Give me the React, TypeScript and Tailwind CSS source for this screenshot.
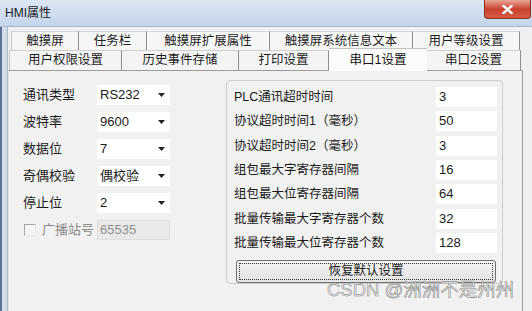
import React from 'react';

const font = "font-['Liberation_Sans','Noto_Sans_CJK_SC',sans-serif]";

const row1 = [
  { label: '触摸屏', w: 'w-[68px]' },
  { label: '任务栏', w: 'w-[68px]' },
  { label: '触摸屏扩展属性', w: 'w-[123px]' },
  { label: '触摸屏系统信息文本', w: 'w-[143px]' },
  { label: '用户等级设置', w: 'w-[107px]' },
];

const row2 = [
  { label: '用户权限设置', w: 'w-[113px]' },
  { label: '历史事件存储', w: 'w-[117px]' },
  { label: '打印设置', w: 'w-[90px]' },
  { label: '串口1设置', w: 'w-[98px]', active: true },
  { label: '串口2设置', w: 'w-[94px]' },
];

const combos = [
  { label: '通讯类型', value: 'RS232' },
  { label: '波特率', value: '9600' },
  { label: '数据位', value: '7' },
  { label: '奇偶校验', value: '偶校验' },
  { label: '停止位', value: '2' },
];

const params = [
  { label: 'PLC通讯超时时间', value: '3' },
  { label: '协议超时时间1（毫秒）', value: '50' },
  { label: '协议超时时间2（毫秒）', value: '3' },
  { label: '组包最大字寄存器间隔', value: '16' },
  { label: '组包最大位寄存器间隔', value: '64' },
  { label: '批量传输最大字寄存器个数', value: '32' },
  { label: '批量传输最大位寄存器个数', value: '128' },
];

function Arrow() {
  return (
    <svg width="7" height="4" viewBox="0 0 7 4" className="shrink-0">
      <path d="M0 0h7L3.5 4z" fill="#222" />
    </svg>
  );
}

export default function App() {
  return (
    <div className={`w-[532px] h-[311px] overflow-hidden flex flex-col bg-[#cfdced] ${font}`}>
      {/* title bar */}
      <div className="h-[27px] shrink-0 flex items-start justify-between bg-gradient-to-b from-[#dbe6f3] to-[#c4d5ea] border-b border-[#a5b8d0]">
        <span className="pl-[5px] pt-[5px] text-[12px] leading-[16px] text-[#1b1b1b]">HMI属性</span>
        <div className="mr-[1px] w-[47px] h-[19px] rounded-b-[4px] border border-t-0 border-[#8a2b20] bg-gradient-to-b from-[#e9a597] via-[#c8412f] to-[#d65b45] flex items-center justify-center">
          <svg width="11" height="9" viewBox="0 0 11 9">
            <path d="M1.5 1l8 7M9.5 1l-8 7" stroke="#fff" strokeWidth="2.4" strokeLinecap="square" />
          </svg>
        </div>
      </div>

      <div className="flex-1 flex">
        {/* left frame */}
        <div className="w-[8px] shrink-0 border-l-2 border-[#5d7294] bg-[#d3deeb] border-r border-r-[#a9b8cb]" />

        <div className="flex-1 flex flex-col bg-[#f0f0f0] pt-[4px]">
          {/* tab row 1 */}
          <div className="h-[19px] ml-[3px] flex shrink-0">
            {row1.map((t) => (
              <div
                key={t.label}
                className={`${t.w} h-full flex items-center justify-center text-[12.5px] text-[#1c1c1c] bg-[#f6f6f6] border-t border-t-[#d6d6d6] border-r border-r-[#8f8f8f] first:border-l first:border-l-[#c8c8c8]`}
              >
                {t.label}
              </div>
            ))}
          </div>
          {/* tab row 2 */}
          <div className="h-[20px] ml-[1px] flex shrink-0 relative z-10">
            {row2.map((t) =>
              t.active ? (
                <div
                  key={t.label}
                  className={`${t.w} h-[23px] -mt-[2px] flex items-start pt-[2px] justify-center text-[12.5px] text-[#111] bg-[#fbfbfb] border-t border-t-[#c4c4c4]`}
                >
                  {t.label}
                </div>
              ) : (
                <div
                  key={t.label}
                  className={`${t.w} h-full flex items-center justify-center text-[12.5px] text-[#1c1c1c] bg-[#f4f4f4] border-t border-t-[#cfcfcf] border-r border-r-[#8f8f8f] first:border-l first:border-l-[#c8c8c8]`}
                >
                  {t.label}
                </div>
              )
            )}
          </div>

          {/* tab page */}
          <div className="relative flex-1 w-[515px] border-t border-l border-r border-[#9c9c9c] border-l-[#e2e2e2] bg-[#f1f1f1] flex">
            {/* left settings */}
            <div className="pl-[14px] pt-[14px] flex flex-col gap-[7px]">
              {combos.map((c) => (
                <div key={c.label} className="h-[20px] flex items-center">
                  <span className="w-[74px] text-[13px] leading-[20px] text-[#1a1a1a]">{c.label}</span>
                  <div className="w-[73px] h-[20px] bg-white flex items-center justify-between pl-[3px] pr-[5px]">
                    <span className="text-[13px] leading-[20px] text-[#1a1a1a]">{c.value}</span>
                    <Arrow />
                  </div>
                </div>
              ))}
              <div className="h-[20px] flex items-center">
                <div className="w-[74px] flex items-center">
                  <span className="ml-[1px] w-[12px] h-[12px] border border-[#a6a6a6] border-r-[#e6e6e6] border-b-[#e6e6e6] bg-[#f4f4f4]" />
                  <span className="ml-[6px] text-[13px] leading-[20px] text-[#8c8c8c]">广播站号</span>
                </div>
                <div className="w-[73px] h-[20px] bg-[#e9e9e9] border border-[#dedede] flex items-center pl-[2px]">
                  <span className="text-[13px] leading-[20px] text-[#8f8f8f]">65535</span>
                </div>
              </div>
            </div>

            {/* group box */}
            <div className="ml-[56px] mt-[9px] w-[277px] h-[204px] border border-[#cdcdcd] rounded-[4px] flex flex-col pt-[4px]">
              {params.map((p) => (
                <div key={p.label} className="h-[24.5px] flex items-center pl-[7px]">
                  <span className="w-[202px] text-[12.5px] leading-[20px] text-[#1a1a1a] whitespace-nowrap">{p.label}</span>
                  <div className="w-[61px] h-[20px] bg-white flex items-center pl-[3px]">
                    <span className="text-[13px] leading-[20px] text-[#1a1a1a]">{p.value}</span>
                  </div>
                </div>
              ))}
              <button className="ml-[9px] mt-[5px] w-[260px] h-[23px] rounded-[3px] border border-[#707070] bg-gradient-to-b from-[#f4f4f4] to-[#e3e3e3] p-[2px]">
                <div className="w-full h-full border border-dotted border-[#333] flex items-center justify-center text-[12.5px] leading-[17px] text-[#1a1a1a]">
                  恢复默认设置
                </div>
              </button>
            </div>

            {/* watermark */}
            <div className="absolute left-[318px] top-[208px] text-[18.5px] leading-[22px] text-[#f4f4f4] whitespace-nowrap [-webkit-text-stroke:0.6px_#8d8d8d]">
              CSDN @洲洲不是州州
            </div>
          </div>
        </div>
      </div>
    </div>
  );
}
